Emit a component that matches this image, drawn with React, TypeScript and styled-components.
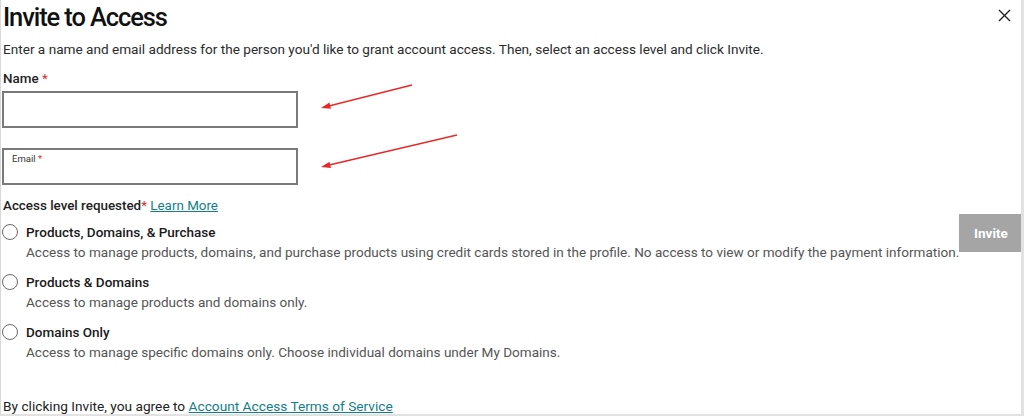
import React from "react";
import styled, { createGlobalStyle } from "styled-components";

const GlobalStyle = createGlobalStyle`
  html, body { margin: 0; padding: 0; background: #fff; }
  body { font-family: Roboto, "Liberation Sans", sans-serif; color: #111; }
  * { box-sizing: border-box; }
`;

const Frame = styled.div`
  position: relative;
  width: 1024px;
  height: 416px;
  overflow: hidden;
  border-left: 1px solid #d9d9d9;
  border-right: 3px solid #e2e2e2;
  border-bottom: 2px solid #e2e2e2;
  padding-left: 1px;
  display: flex;
  flex-direction: column;
`;

const Header = styled.div`
  display: flex;
  justify-content: space-between;
  align-items: flex-start;
  padding-right: 10px;
`;

const Title = styled.h1`
  margin: 0;
  padding: 0 0 0 1px;
  font-family: Roboto, "Liberation Sans", sans-serif;
  font-size: 25.5px;
  letter-spacing: -1.1px;
  line-height: 34px;
  font-weight: 500;
  color: #111;
`;

const CloseButton = styled.button`
  margin-top: 8px;
  width: 14px;
  height: 14px;
  padding: 0;
  border: none;
  background: none;
  display: flex;
  align-items: center;
  justify-content: center;
`;

const Intro = styled.p`
  margin: 6px 0 0 1px;
  font-size: 13.6px;
  line-height: 18px;
  color: #2b2b2b;
`;

const Body = styled.div`
  display: flex;
  align-items: flex-start;
  flex: 1;
`;

const Main = styled.div`
  width: 957px;
  display: flex;
  flex-direction: column;
`;

const Aside = styled.div`
  padding-top: 156px;
`;

const FieldLabel = styled.label`
  display: block;
  margin: 13px 0 0 1px;
  font-size: 13.4px;
  line-height: 16px;
  font-weight: 500;
  color: #222;
`;

const Req = styled.span`
  color: #d62c2c;
  font-weight: 400;
`;

const InputBox = styled.div<{ $top: number }>`
  position: relative;
  margin-top: ${(p) => p.$top}px;
  width: 296px;
  height: 37px;
  border: 2px solid #7a7a7a;
`;

const FloatLabel = styled.span`
  position: absolute;
  left: 8px;
  top: 3px;
  font-size: 9.5px;
  line-height: 12px;
  color: #333;
`;

const SectionLabel = styled.div`
  margin: 13px 0 0 1px;
  font-size: 13.4px;
  line-height: 16px;
  font-weight: 500;
  color: #222;
`;

const Link = styled.a`
  color: #11808a;
  font-weight: 400;
  text-decoration: underline;
`;

const Options = styled.div`
  display: flex;
  flex-direction: column;
  gap: 14px;
  margin-top: 10px;
`;

const Option = styled.label`
  display: grid;
  grid-template-columns: 24px 1fr;
  row-gap: 4px;
  align-items: center;
`;

const Radio = styled.span`
  width: 16px;
  height: 16px;
  border-radius: 50%;
  border: 1.5px solid #6b6b6b;
  background: #fff;
`;

const OptionTitle = styled.span`
  font-size: 13.5px;
  line-height: 16px;
  font-weight: 500;
  color: #1a1a1a;
`;

const OptionDesc = styled.span`
  grid-column: 2;
  font-size: 13.55px;
  line-height: 16px;
  color: #555;
  white-space: nowrap;
`;

const InviteButton = styled.button`
  width: 64px;
  height: 38px;
  border: none;
  background: #a5a5a5;
  color: #fff;
  font-family: Roboto, "Liberation Sans", sans-serif;
  font-size: 13.5px;
  font-weight: 700;
`;

const Footer = styled.p`
  margin: 0 0 0 1px;
  font-size: 13.7px;
  line-height: 16px;
  color: #222;
`;

const Annotations = styled.svg`
  position: absolute;
  left: 0;
  top: 0;
  pointer-events: none;
`;

const options = [
  {
    title: "Products, Domains, & Purchase",
    desc: "Access to manage products, domains, and purchase products using credit cards stored in the profile. No access to view or modify the payment information.",
  },
  { title: "Products & Domains", desc: "Access to manage products and domains only." },
  {
    title: "Domains Only",
    desc: "Access to manage specific domains only. Choose individual domains under My Domains.",
  },
];

function Arrow({ x1, y1, x2, y2 }: { x1: number; y1: number; x2: number; y2: number }) {
  const ang = Math.atan2(y1 - y2, x1 - x2);
  const len = 10;
  const w = 0.32;
  const ax = x2 + len * Math.cos(ang - w);
  const ay = y2 + len * Math.sin(ang - w);
  const bx = x2 + len * Math.cos(ang + w);
  const by = y2 + len * Math.sin(ang + w);
  return (
    <g>
      <line x1={x1} y1={y1} x2={x2 + 4 * Math.cos(ang)} y2={y2 + 4 * Math.sin(ang)} stroke="#e8292b" strokeWidth={1.5} />
      <polygon points={`${x2},${y2} ${ax},${ay} ${bx},${by}`} fill="#e8292b" />
    </g>
  );
}

export default function App() {
  return (
    <>
      <GlobalStyle />
      <Frame>
        <Header>
          <Title>Invite to Access</Title>
          <CloseButton aria-label="Close">
            <svg width="13" height="13" viewBox="0 0 13 13">
              <path d="M1 1 L12 12 M12 1 L1 12" stroke="#222" strokeWidth="1.4" />
            </svg>
          </CloseButton>
        </Header>
        <Intro>
          Enter a name and email address for the person you'd like to grant account access. Then, select an access level and click Invite.
        </Intro>
        <Body>
          <Main>
            <FieldLabel>
              Name <Req>*</Req>
            </FieldLabel>
            <InputBox $top={4} />
            <InputBox $top={20}>
              <FloatLabel>
                Email <Req>*</Req>
              </FloatLabel>
            </InputBox>
            <SectionLabel>
              Access level requested<Req>*</Req> <Link href="#">Learn More</Link>
            </SectionLabel>
            <Options>
              {options.map((o) => (
                <Option key={o.title}>
                  <Radio />
                  <OptionTitle>{o.title}</OptionTitle>
                  <OptionDesc>{o.desc}</OptionDesc>
                </Option>
              ))}
            </Options>
          </Main>
          <Aside>
            <InviteButton>Invite</InviteButton>
          </Aside>
        </Body>
        <Footer>
          By clicking Invite, you agree to <Link href="#">Account Access Terms of Service</Link>
        </Footer>
        <Annotations width="1024" height="416">
          <Arrow x1={411} y1={85} x2={320} y2={108} />
          <Arrow x1={456} y1={135} x2={320} y2={167} />
        </Annotations>
      </Frame>
    </>
  );
}
